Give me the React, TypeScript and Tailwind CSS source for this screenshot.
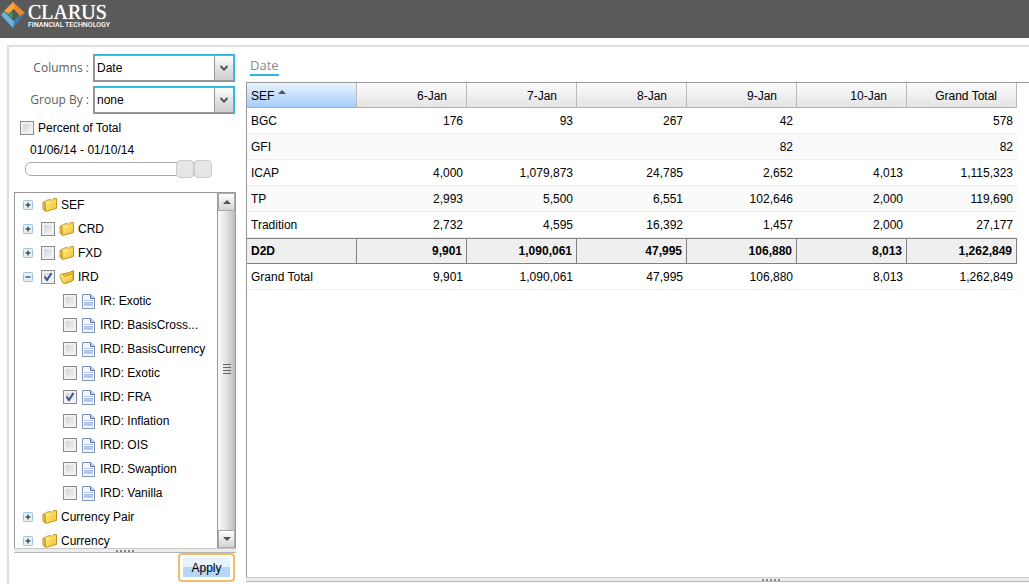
import React, { useState } from "react";
import clsx from "clsx";

const COLUMNS = ["6-Jan", "7-Jan", "8-Jan", "9-Jan", "10-Jan", "Grand Total"];

const ROWS = [
  { sef: "BGC", values: ["176", "93", "267", "42", "", "578"] },
  { sef: "GFI", values: ["", "", "", "82", "", "82"] },
  { sef: "ICAP", values: ["4,000", "1,079,873", "24,785", "2,652", "4,013", "1,115,323"] },
  { sef: "TP", values: ["2,993", "5,500", "6,551", "102,646", "2,000", "119,690"] },
  { sef: "Tradition", values: ["2,732", "4,595", "16,392", "1,457", "2,000", "27,177"] },
  { sef: "D2D", values: ["9,901", "1,090,061", "47,995", "106,880", "8,013", "1,262,849"], subtotal: true },
  { sef: "Grand Total", values: ["9,901", "1,090,061", "47,995", "106,880", "8,013", "1,262,849"] },
];

type Node = {
  label: string;
  checkable?: boolean;
  checked?: boolean;
  open?: boolean;
  children?: Node[];
};

const TREE: Node[] = [
  { label: "SEF" },
  { label: "CRD", checkable: true },
  { label: "FXD", checkable: true },
  {
    label: "IRD",
    checkable: true,
    checked: true,
    open: true,
    children: [
      { label: "IR: Exotic" },
      { label: "IRD: BasisCross..." },
      { label: "IRD: BasisCurrency" },
      { label: "IRD: Exotic" },
      { label: "IRD: FRA", checked: true },
      { label: "IRD: Inflation" },
      { label: "IRD: OIS" },
      { label: "IRD: Swaption" },
      { label: "IRD: Vanilla" },
    ],
  },
  { label: "Currency Pair" },
  { label: "Currency" },
];

const LogoMark = () => (
  <svg viewBox="0 0 26 28" className="h-7 w-[26px]" aria-hidden="true">
    <path d="M13 1 25 12 19 15.5 8 9Z" fill="#ee8a25" />
    <path d="M13 1 4 10 9 13 15 7Z" fill="#f9a63c" />
    <path d="M1 14 4 10.500 9 13 19 16 25 12.500 13 27Z" fill="#3a7fb4" />
    <path d="M1 14 4 10.500 14 20 13 27Z" fill="#6fb0d8" />
    <path d="M13.500 8 19.500 14 13.500 20 8 14Z" fill="#545956" />
    <path d="M8.500 14 12.500 10.500V17.500Z" fill="#35a845" />
  </svg>
);

const FolderIcon = ({ open = false }: { open?: boolean }) => (
  <svg viewBox="0 0 16 16" className="h-4 w-4 shrink-0" aria-hidden="true">
    <defs>
      <linearGradient id="folder" x1="0" y1="0" x2="1" y2="1">
        <stop offset="0" stopColor="#fff49a" />
        <stop offset="1" stopColor="#f0bb22" />
      </linearGradient>
    </defs>
    {open ? (
      <>
        <path d="M3.500 5 10.500 3.500 14.500 1.500V11L6.500 14.500Z" fill="#eec23a" stroke="#b98c18" />
        <path d="M.8 6.500 3 4.500 5.500 7.500 14 4.500V11.500L5.500 14.500 3.500 13.500Z" fill="url(#folder)" stroke="#c3961f" />
      </>
    ) : (
      <>
        <path d="M1 5.500 3 4V13.500L1 12Z" fill="#fbe36c" stroke="#b98c18" />
        <path d="M3 4.500 4 3.500 8 2.500 9.500 3.500 12 1.500H14.500V11.500L3.500 14.500Z" fill="url(#folder)" stroke="#c3961f" />
      </>
    )}
  </svg>
);

const PageIcon = () => (
  <svg viewBox="0 0 13 15" className="h-[15px] w-[13px] shrink-0" aria-hidden="true">
    <path d="M.5 .5H9L12.500 4V14.500H.5Z" fill="#f3f7fe" stroke="#7e93be" />
    <path d="M8.500 .5V4.500H12.500" fill="#c3d2ee" stroke="#5c76ad" />
    <path d="M2 6.500H11" stroke="#b4c6e9" />
    <path d="M2 8H11V12H2Z" fill="#aec2e8" />
    <path d="M2 9.500H11M2 11.500H11" stroke="#bccdee" />
  </svg>
);

const Expander = ({ open = false }: { open?: boolean }) => (
  <button
    type="button"
    aria-label={open ? "Collapse" : "Expand"}
    className="mr-2 h-2.5 w-2.5 shrink-0"
  >
    <svg viewBox="0 0 10 10" className="h-2.5 w-2.5">
      <rect x=".5" y=".5" width="9" height="9" rx="1" fill="#e3f0f8" stroke="#9cc4de" />
      <path d="M2.500 5H7.500" stroke="#111" />
      {!open && <path d="M5 2.500V7.500" stroke="#111" />}
    </svg>
  </button>
);

const Checkbox = ({ id, initial = false }: { id: string; initial?: boolean }) => {
  const [checked, setChecked] = useState(initial);

  return (
    <span className="grid h-3.5 w-3.5 shrink-0 place-items-center">
      <input
        id={id}
        type="checkbox"
        checked={checked}
        onChange={() => setChecked(!checked)}
        className="col-start-1 row-start-1 h-3.5 w-3.5 appearance-none border border-[#8a8b8c] bg-linear-to-br from-[#c8ccd2] to-[#fafafa] shadow-[inset_0_0_0_2px_#f1f1f1]"
      />
      {checked && (
        <svg viewBox="0 0 14 14" className="pointer-events-none col-start-1 row-start-1 h-3.5 w-3.5">
          <path d="M3.500 6.500 6 10 10.500 3" fill="none" stroke="#3b5391" strokeWidth="2" />
        </svg>
      )}
    </span>
  );
};

const ComboBox = ({ id, label, options }: { id: string; label: string; options: string[] }) => (
  <div className="flex items-center justify-end gap-1">
    <label htmlFor={id} className="font-['Open_Sans',sans-serif] text-xs text-[#606060]">
      {label} :
    </label>
    <div className="relative h-7 w-[142px] border border-[#31b3e2]">
      <select
        id={id}
        className="h-full w-full appearance-none border border-[#999] bg-white pl-0.5 text-xs outline-none"
      >
        {options.map((option) => (
          <option key={option}>{option}</option>
        ))}
      </select>
      <span className="pointer-events-none absolute inset-y-0 right-0 flex w-5 items-center justify-center border border-[#999] bg-linear-to-b from-white via-[#e4e4e4] to-[#cfcfcf]">
        <svg viewBox="0 0 8 6" className="h-1.5 w-2">
          <path d="M.5 1 4 4.500 7.500 1" fill="none" stroke="#555" strokeWidth="2" />
        </svg>
      </span>
    </div>
  </div>
);

const Splitter = ({ className }: { className?: string }) => (
  <div
    className={clsx(
      "flex h-[5px] shrink-0 items-center gap-0.5 border-t border-b border-t-[#c9c9c9] border-b-[#b4b4b4] bg-[#ececec]",
      className,
    )}
  >
    {[0, 1, 2, 3, 4].map((dot) => (
      <span key={dot} className="h-0.5 w-0.5 bg-[#858585]" />
    ))}
  </div>
);

const TreeRow = ({ node }: { node: Node }) => {
  const id = `node-${node.label}`;

  return (
    <li>
      <div className="flex h-6 items-center pl-2">
        <Expander open={node.open} />
        {node.checkable ? (
          <>
            <Checkbox id={id} initial={node.checked} />
            <label htmlFor={id} className="flex items-center gap-[3px] pl-1">
              <FolderIcon open={node.open} />
              {node.label}
            </label>
          </>
        ) : (
          <span className="flex items-center gap-[3px] pl-px">
            <FolderIcon />
            {node.label}
          </span>
        )}
      </div>
      {node.children && (
        <ul>
          {node.children.map((child) => (
            <li key={child.label} className="flex h-6 items-center pl-12">
              <Checkbox id={`node-${child.label}`} initial={child.checked} />
              <label
                htmlFor={`node-${child.label}`}
                className="flex items-center gap-[5px] pl-[5px] whitespace-nowrap"
              >
                <PageIcon />
                {child.label}
              </label>
            </li>
          ))}
        </ul>
      )}
    </li>
  );
};

const ScrollBar = () => (
  <div className="flex w-[18px] shrink-0 flex-col border-l border-[#999] bg-linear-to-r from-[#fafafa] via-[#e2e2e2] to-[#bcbcbc]">
    <button
      type="button"
      aria-label="Scroll up"
      className="flex h-[18px] items-center justify-center border border-[#aaa] bg-linear-to-b from-white to-[#d4d4d4]"
    >
      <svg viewBox="0 0 8 4" className="h-1 w-2">
        <path d="M0 4 4 0 8 4Z" fill="#555" />
      </svg>
    </button>
    <div className="flex flex-1 flex-col items-center justify-center gap-0.5 pb-1">
      {[0, 1, 2, 3].map((line) => (
        <span key={line} className="h-px w-2 bg-[#666]" />
      ))}
    </div>
    <button
      type="button"
      aria-label="Scroll down"
      className="flex h-[18px] items-center justify-center border border-[#aaa] bg-linear-to-b from-white to-[#d4d4d4]"
    >
      <svg viewBox="0 0 8 4" className="h-1 w-2">
        <path d="M0 0 4 4 8 0Z" fill="#555" />
      </svg>
    </button>
  </div>
);

const rangeClass =
  "pointer-events-none col-start-1 row-start-1 h-[18px] appearance-none bg-transparent [&::-webkit-slider-thumb]:pointer-events-auto [&::-webkit-slider-thumb]:h-[18px] [&::-webkit-slider-thumb]:w-[18px] [&::-webkit-slider-thumb]:appearance-none [&::-webkit-slider-thumb]:rounded [&::-webkit-slider-thumb]:border [&::-webkit-slider-thumb]:border-[#ccc] [&::-webkit-slider-thumb]:bg-[#e6e6e6]";

const Sidebar = () => (
  <aside className="flex w-[227px] shrink-0 flex-col pt-[7px] pb-0.5 pl-[5px]">
    <div className="flex flex-col gap-1 pr-px">
      <ComboBox id="columns" label="Columns" options={["Date", "SEF", "Currency"]} />
      <ComboBox id="group-by" label="Group By" options={["none", "SEF", "Currency"]} />
    </div>

    <div className="mt-1.5 flex h-4 items-center gap-1 pl-1.5">
      <Checkbox id="percent" />
      <label htmlFor="percent">Percent of Total</label>
    </div>

    <div className="pt-1.5 pl-4 leading-4">01/06/14 - 01/10/14</div>

    {/* Date range */}
    <div className="mt-0.5 ml-[11px] grid w-[187px] items-center">
      <div className="col-start-1 row-start-1 h-3.5 rounded-md border border-[#aaa]" />
      <input type="range" aria-label="From date" min={0} max={4} defaultValue={4} className={clsx(rangeClass, "w-[169px]")} />
      <input type="range" aria-label="To date" min={0} max={4} defaultValue={4} className={clsx(rangeClass, "w-full")} />
    </div>

    <div className="mt-3.5 flex min-h-0 flex-1 border border-b-0 border-[#999]">
      <ul className="min-w-0 flex-1 overflow-hidden">
        {TREE.map((node) => (
          <TreeRow key={node.label} node={node} />
        ))}
      </ul>
      <ScrollBar />
    </div>
    <Splitter className="justify-center" />

    <button
      type="button"
      className="mr-px h-[29px] w-[57px] self-end rounded-sm border-2 border-[#f0bd6c] bg-white p-[3px]"
    >
      <span className="flex h-full items-center justify-center bg-linear-to-b from-[#e8f3fe] from-50% to-[#b5d7f8] to-50%">
        Apply
      </span>
    </button>
  </aside>
);

const headCell = "h-[25px] border-r border-b border-r-[#bbb] border-b-[#b0b0b0] pt-px font-normal";

const PivotTable = () => (
  <table className="w-[770px] table-fixed border-separate border-spacing-0">
    <thead>
      <tr>
        <th
          scope="col"
          className={clsx(headCell, "bg-linear-to-b from-[#e9f3fe] to-[#a5cdf7] pl-1 text-left")}
        >
          <span className="flex items-center gap-1">
            SEF
            <svg viewBox="0 0 8 4" className="mb-2 h-1 w-2">
              <path d="M0 4 4 0 8 4Z" fill="#3c5a78" />
            </svg>
          </span>
        </th>
        {COLUMNS.map((column) => (
          <th
            key={column}
            scope="col"
            className={clsx(headCell, "bg-linear-to-b from-[#fbfbfb] to-[#e4e4e4] pr-[19px] text-right")}
          >
            {column}
          </th>
        ))}
      </tr>
    </thead>
    <tbody>
      {ROWS.map((row) => {
        const cell = row.subtotal
          ? "h-[26px] border-y border-r border-[#808080] bg-[#efefef] font-bold"
          : "h-[26px] border-b border-[#ededed]";
        return (
          <tr key={row.sef} className="even:bg-[#fafafa]">
            <th scope="row" className={clsx(cell, "pl-1 text-left", !row.subtotal && "font-normal")}>
              {row.sef}
            </th>
            {row.values.map((value, i) => (
              <td key={COLUMNS[i]} className={clsx(cell, "pr-1 text-right")}>
                {value}
              </td>
            ))}
          </tr>
        );
      })}
    </tbody>
  </table>
);

export default function App() {
  return (
    <div className="flex h-screen flex-col overflow-hidden bg-white font-['Liberation_Sans',Arial,sans-serif] text-xs text-black">
      <header className="flex h-[38px] shrink-0 items-start bg-[#5a5a5a] pt-px">
        <LogoMark />
        <div className="pt-px pl-0.5 text-white">
          <div className="font-['Liberation_Serif',serif] text-[20px] leading-5 text-shadow-[0_0_1px_#fff]">
            CLARUS
          </div>
          <div className="font-[Roboto,sans-serif] text-[7px] leading-[6px] font-medium">
            FINANCIAL TECHNOLOGY
          </div>
        </div>
      </header>

      <div className="mt-[7px] ml-[7px] flex min-h-0 flex-1 border-t-2 border-l-2 border-[#dedede]">
        <Sidebar />

        <main className="flex min-w-0 flex-1 flex-col pt-2.5 pb-0.5 pl-2.5">
          <div className="pl-1">
            <button
              type="button"
              className="border-b-2 border-[#31b3e2] font-['Open_Sans',sans-serif] text-[13px] leading-[17px] text-[#8a8a8a]"
            >
              Date
            </button>
          </div>
          <div className="mt-1.5 min-h-0 flex-1 border-t border-l border-[#999]">
            <PivotTable />
          </div>
          <Splitter className="pl-[516px]" />
        </main>
      </div>
    </div>
  );
}
